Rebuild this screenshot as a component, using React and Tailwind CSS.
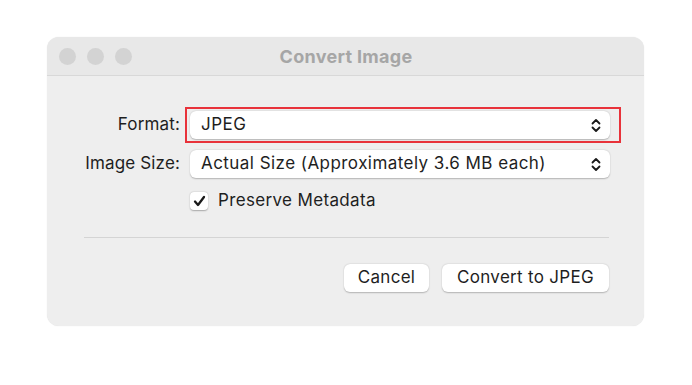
import React from "react";

const font = { fontFamily: "Inter, 'Liberation Sans', sans-serif" };

function Chevrons() {
  return (
    <svg width="10" height="17" viewBox="0 0 10 17" fill="none" stroke="#1a1a1a" strokeWidth="1.8" strokeLinecap="round" strokeLinejoin="round">
      <path d="M1.5 6.5 L5 3 L8.5 6.5" />
      <path d="M1.5 10.5 L5 14 L8.5 10.5" />
    </svg>
  );
}

function Popup({ children }) {
  return (
    <div className="flex h-[28px] w-[420px] items-center justify-between rounded-[6px] bg-white pl-[11px] pr-[9px] shadow-[0_0.5px_1.5px_rgba(0,0,0,0.25)]">
      <span className="text-[17px] tracking-[0.45px] text-[#1e1e1e]">{children}</span>
      <Chevrons />
    </div>
  );
}

function Label({ children }) {
  return <div className="text-right text-[17px] tracking-[0.15px] text-[#1e1e1e] whitespace-nowrap">{children}</div>;
}

export default function App() {
  return (
    <div className="h-[385px] w-[692px] bg-white pl-[47px] pt-[37px]" style={font}>
      <div className="flex h-[289px] w-[597px] flex-col overflow-hidden rounded-[12px] bg-[#eeeeee] shadow-[0_0_1px_rgba(0,0,0,0.15)]">
        <div className="relative flex h-[39px] shrink-0 items-center border-b border-[#d8d8d8] bg-[#e8e8e8] pl-[12px]">
          <div className="flex gap-[11px]">
            <div className="h-[17px] w-[17px] rounded-full bg-[#d3d3d3]" />
            <div className="h-[17px] w-[17px] rounded-full bg-[#d3d3d3]" />
            <div className="h-[17px] w-[17px] rounded-full bg-[#d3d3d3]" />
          </div>
          <div className="absolute inset-0 flex items-center justify-center pl-[1px] text-[18px] font-bold tracking-[0.3px] text-[#a6a6a6]">
            Convert Image
          </div>
        </div>
        <div className="flex flex-col pt-[35px]">
          <div className="grid grid-cols-[133px_420px] items-center gap-x-[10px] gap-y-[11px]">
            <Label>Format:</Label>
            <div className="relative">
              <Popup>JPEG</Popup>
              <div className="pointer-events-none absolute -bottom-[4px] -left-[5px] -right-[11px] -top-[4px] border-2 border-[#e8323a]" />
            </div>
            <Label>Image Size:</Label>
            <Popup>Actual Size (Approximately 3.6 MB each)</Popup>
          </div>
          <div className="ml-[143px] mt-[10px] flex h-[25px] items-center gap-[10px]">
            <div className="flex h-[18px] w-[18px] items-center justify-center rounded-[4px] bg-white shadow-[0_0.5px_1.5px_rgba(0,0,0,0.3)]">
              <svg width="13" height="12" viewBox="0 0 13 12" fill="none" stroke="#1a1a1a" strokeWidth="2.3" strokeLinecap="round" strokeLinejoin="round">
                <path d="M2 6.5 L5 10 L11 2" />
              </svg>
            </div>
            <span className="text-[17px] tracking-[0.35px] text-[#1e1e1e]">Preserve Metadata</span>
          </div>
          <div className="ml-[37px] mt-[24px] h-px w-[525px] bg-[#d4d4d4]" />
          <div className="mt-[26px] flex w-[562px] justify-end gap-[13px]">
            <div className="flex h-[28px] w-[85px] items-center justify-center rounded-[6px] bg-white text-[17px] tracking-[0.3px] text-[#1e1e1e] shadow-[0_0.5px_1.5px_rgba(0,0,0,0.25)]">Cancel</div>
            <div className="flex h-[28px] w-[167px] items-center justify-center rounded-[6px] bg-white text-[17px] tracking-[0.3px] text-[#1e1e1e] shadow-[0_0.5px_1.5px_rgba(0,0,0,0.25)]">Convert to JPEG</div>
          </div>
        </div>
      </div>
    </div>
  );
}
